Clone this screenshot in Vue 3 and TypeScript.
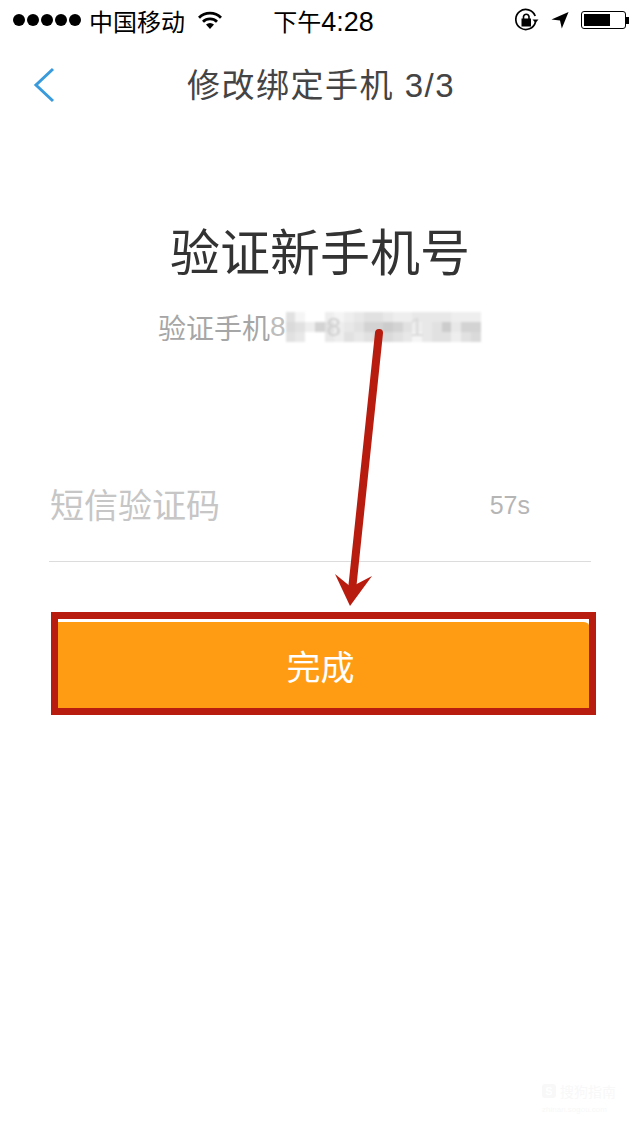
<script setup lang="ts">
// mosaic over the phone number, one string per row, 0 = white .. 7 = darkest
const mosaicRows = [
  '41002123443223333222',
  '54264234667642347366',
  '43003243455431344245',
]
const shades = ['#ffffff', '#f5f5f5', '#eeeeee', '#e8e8e8', '#e1e1e1', '#dadada', '#d3d3d3', '#cccccc']
const cells = mosaicRows.flatMap((row) => row.split('').map((c) => shades[Number(c)]))
const dots = [1, 2, 3, 4, 5]
</script>

<template>
  <div class="screen">
    <div class="status-bar">
      <div class="status-left">
        <div class="signal">
          <span v-for="d in dots" :key="d" class="dot"></span>
        </div>
        <span class="carrier">中国移动</span>
        <svg class="wifi" width="24" height="18" viewBox="0 0 24 18">
          <path d="M12 18 L8 13.6 A6 6 0 0 1 16 13.6 Z" fill="#000" />
          <path d="M5 10.8 A10 10 0 0 1 19 10.8" fill="none" stroke="#000" stroke-width="2.8" />
          <path d="M1 6.8 A15.5 15.5 0 0 1 23 6.8" fill="none" stroke="#000" stroke-width="2.8" />
        </svg>
      </div>
      <span class="time">下午<span class="time-digits">4:28</span></span>
      <div class="status-right">
        <svg width="24" height="24" viewBox="0 0 24 24">
          <path d="M20.5 14 A10 10 0 1 1 20.2 8" fill="none" stroke="#000" stroke-width="1.7" />
          <path d="M17.5 11.5 L23.5 11.5 L20.5 15 Z" fill="#000" />
          <rect x="6.5" y="10.5" width="9.5" height="8" fill="#000" />
          <path d="M8.5 11 V8.5 A2.8 2.8 0 0 1 14 8.5 V11" fill="none" stroke="#000" stroke-width="1.6" />
        </svg>
        <svg class="location" width="18" height="18" viewBox="0 0 20 20">
          <path d="M0.5 9.5 L19.5 1 L12 19.5 L10 10.5 Z" fill="#000" />
        </svg>
        <div class="battery">
          <div class="battery-body"><div class="battery-level"></div></div>
          <div class="battery-cap"></div>
        </div>
      </div>
    </div>

    <div class="nav-bar">
      <svg class="back" width="22" height="36" viewBox="0 0 22 36">
        <path d="M20 2 L3 18 L20 34" fill="none" stroke="#3a9bdc" stroke-width="3" />
      </svg>
      <span class="nav-title">修改绑定手机 3/3</span>
    </div>

    <h1 class="heading">验证新手机号</h1>

    <div class="subtitle">
      <span>验证手机</span><span class="first-digit">8</span>
      <div class="mosaic">
        <span v-for="(c, i) in cells" :key="i" :style="{ background: c }"></span>
        <span class="ghost ghost-8">8</span>
        <span class="ghost ghost-1">1</span>
      </div>
    </div>

    <div class="code-row">
      <span class="placeholder">短信验证码</span>
      <span class="countdown">57s</span>
    </div>

    <div class="btn-mark">
      <button class="done-btn">完成</button>
    </div>

    <!-- annotation arrow drawn over the page -->
    <svg class="arrow" width="640" height="640" viewBox="0 0 640 640">
      <path d="M379 333 L352 590" stroke="#b81c0e" stroke-width="8" stroke-linecap="round" fill="none" />
      <path d="M350 606 L335 574 L351 587 L372 576 Z" fill="#b81c0e" />
    </svg>

    <div class="watermark">
      <div class="wm-top"><span class="wm-logo">S</span><span>搜狗指南</span></div>
      <div class="wm-url">zhinan.sogou.com</div>
    </div>
  </div>
</template>

<style scoped>
.screen {
  position: relative;
  width: 640px;
  height: 1136px;
  overflow: hidden;
  background: #fff;
  font-family: "Liberation Sans", "Noto Sans CJK SC", sans-serif;
}

.status-bar {
  height: 40px;
  display: grid;
  grid-template-columns: 1fr auto 1fr;
  align-items: center;
  padding: 0 11px 0 13px;
  color: #000;
}

.status-left {
  display: flex;
  align-items: center;
}

.signal {
  display: flex;
  gap: 2px;
}

.dot {
  width: 12px;
  height: 12px;
  border-radius: 50%;
  background: #000;
}

.carrier {
  margin-left: 8px;
  font-size: 24px;
}

.wifi {
  margin-left: 13px;
}

.time {
  margin-left: 5px;
  font-size: 24px;
}

.time-digits {
  font-size: 27px;
}

.status-right {
  display: flex;
  align-items: center;
  justify-content: flex-end;
}

.location {
  margin-left: 12px;
}

.battery {
  display: flex;
  align-items: center;
  margin-left: 12px;
}

.battery-body {
  width: 45px;
  height: 18px;
  padding: 2px;
  box-sizing: border-box;
  border: 1px solid #000;
  border-radius: 3px;
}

.battery-level {
  width: 26px;
  height: 100%;
  background: #000;
}

.battery-cap {
  width: 3px;
  height: 7px;
  background: #000;
}

.nav-bar {
  position: relative;
  height: 88px;
  display: flex;
  align-items: center;
  justify-content: center;
  padding: 0 0 3px 2px;
  box-sizing: border-box;
}

.back {
  position: absolute;
  left: 33px;
  top: 27px;
}

.nav-title {
  font-size: 33px;
  letter-spacing: 1.5px;
  color: #444;
}

.heading {
  margin: 93px 0 0;
  height: 66px;
  line-height: 66px;
  text-align: center;
  font-size: 50px;
  font-weight: 400;
  color: #333;
}

.subtitle {
  margin: 20px 0 0 158px;
  height: 40px;
  display: flex;
  align-items: center;
  font-size: 28px;
  color: #a6a6a6;
}

.first-digit {
  color: #bdbdbd;
}

.mosaic {
  position: relative;
  width: 195px;
  height: 30px;
  display: grid;
  grid-template-columns: repeat(20, 9.75px);
  grid-template-rows: repeat(3, 10px);
  filter: blur(0.8px);
}

.ghost {
  position: absolute;
  top: 0;
  font-size: 26px;
  line-height: 30px;
  color: #d0d0d0;
}

.ghost-8 {
  left: 41px;
}

.ghost-1 {
  left: 124px;
  color: #dadada;
}

.code-row {
  margin: 103px 49px 0;
  height: 106px;
  display: flex;
  align-items: center;
  justify-content: space-between;
  padding: 0 61px 5px 1px;
  border-bottom: 1px solid #dcdcdc;
}

.placeholder {
  font-size: 34px;
  color: #c6c6c6;
}

.countdown {
  margin-top: 4px;
  font-size: 25px;
  color: #b5b5b5;
}

.btn-mark {
  margin: 50px 0 0 51px;
  width: 545px;
  height: 103px;
  box-sizing: border-box;
  border: 7px solid #b81c0e;
  background: #fff;
}

.done-btn {
  display: block;
  width: 100%;
  height: 100%;
  border: 0;
  border-top: 3px solid #fff;
  border-top-right-radius: 6px;
  padding: 0 6px 0 0;
  background: #ff9c14;
  color: #fff;
  font-family: inherit;
  font-size: 34px;
}

.arrow {
  position: absolute;
  left: 0;
  top: 0;
  pointer-events: none;
}

.watermark {
  position: absolute;
  left: 542px;
  top: 1081px;
  color: #f8f8f8;
}

.wm-top {
  display: flex;
  align-items: center;
  gap: 4px;
  font-size: 14px;
}

.wm-logo {
  width: 14px;
  height: 14px;
  border-radius: 3px;
  background: #f8f8f8;
  color: #fff;
  font-size: 11px;
  font-weight: 700;
  line-height: 14px;
  text-align: center;
}

.wm-url {
  margin-top: 4px;
  font-size: 8px;
}
</style>

<style>
html,
body {
  margin: 0;
  background: #fff;
}
</style>
